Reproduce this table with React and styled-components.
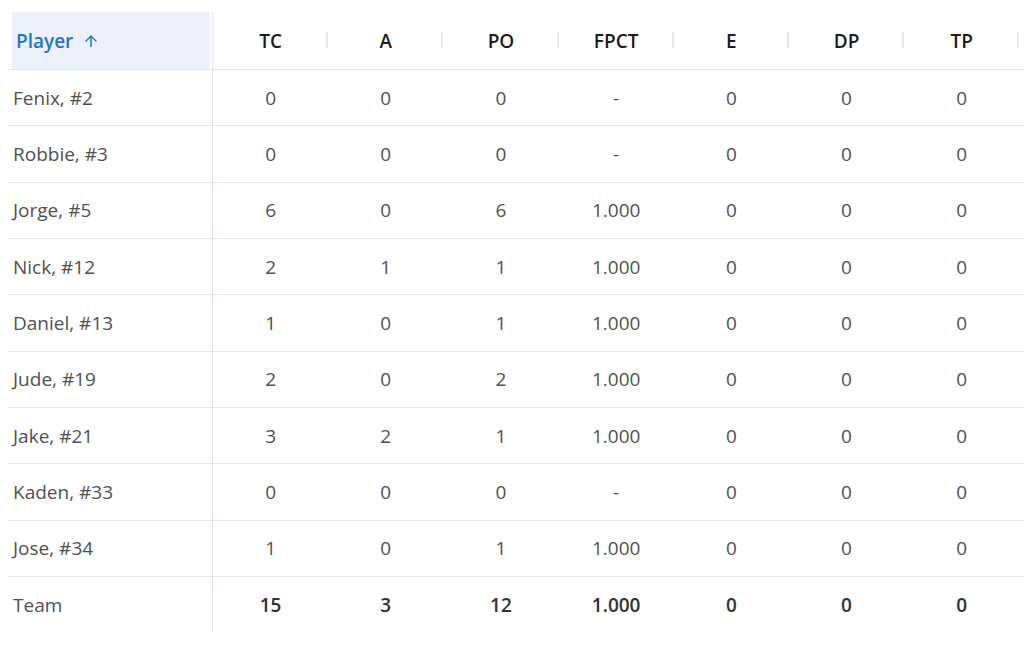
import React from 'react';
import styled, { createGlobalStyle } from 'styled-components';

const GlobalStyle = createGlobalStyle`
  body {
    margin: 0;
    background: #fff;
    font-family: "Open Sans", "Noto Sans", sans-serif;
    overflow: hidden;
  }
`;

const columns = ['TC', 'A', 'PO', 'FPCT', 'E', 'DP', 'TP'];

const players = [
    ['Fenix, #2', 0, 0, 0, '-', 0, 0, 0],
    ['Robbie, #3', 0, 0, 0, '-', 0, 0, 0],
    ['Jorge, #5', 6, 0, 6, '1.000', 0, 0, 0],
    ['Nick, #12', 2, 1, 1, '1.000', 0, 0, 0],
    ['Daniel, #13', 1, 0, 1, '1.000', 0, 0, 0],
    ['Jude, #19', 2, 0, 2, '1.000', 0, 0, 0],
    ['Jake, #21', 3, 2, 1, '1.000', 0, 0, 0],
    ['Kaden, #33', 0, 0, 0, '-', 0, 0, 0],
    ['Jose, #34', 1, 0, 1, '1.000', 0, 0, 0],
];

const team = ['Team', 15, 3, 12, '1.000', 0, 0, 0];

const Wrap = styled.div`
    padding: 12px 0 0 8px;
    width: 1016px;
`;

const Row = styled.div`
    display: grid;
    grid-template-columns: 205px repeat(7, 115.2px) 1fr;
    height: ${(p) => (p.head ? '58px' : '56.33px')};
    box-sizing: border-box;
    border-bottom: ${(p) => (p.last ? 'none' : '1px solid #e3e8ef')};
`;

const NameCell = styled.div`
    display: flex;
    align-items: center;
    border-right: 1px solid #dfe6f0;
    padding-left: 5px;
    font-size: 19px;
    color: #505050;
`;

const HeadName = styled.div`
    border-right: 1px solid #dfe6f0;
    padding: 0 2px 0 4px;
    display: flex;
`;

const SortBox = styled.div`
    flex: 1;
    background: #edf2fa;
    display: flex;
    align-items: center;
    gap: 9px;
    padding-left: 4px;
    font-size: 19px;
    font-weight: 600;
    color: #1f74c9;
    svg {
        width: 18px;
        height: 18px;
        fill: #1f74c9;
    }
`;

const HeadCell = styled.div`
    position: relative;
    display: flex;
    align-items: center;
    justify-content: center;
    font-size: 19px;
    font-weight: 600;
    color: #1b1b1b;
    &::after {
        content: '';
        position: absolute;
        right: 0;
        top: 20px;
        width: 2px;
        height: 16px;
        background: #e2e8f1;
    }
`;

const Cell = styled.div`
    display: flex;
    align-items: center;
    justify-content: center;
    font-size: 19px;
    font-weight: ${(p) => (p.bold ? 600 : 400)};
    color: ${(p) => (p.bold ? '#333' : '#505050')};
`;

const ArrowUp = () => (
    <svg viewBox="0 0 24 24">
        <path d="M4 12l1.41 1.41L11 7.83V20h2V7.83l5.58 5.59L20 12l-8-8-8 8z" />
    </svg>
);

const App = () => {
    return (
        <Wrap>
            <GlobalStyle />
            <Row head>
                <HeadName>
                    <SortBox>
                        Player <ArrowUp />
                    </SortBox>
                </HeadName>
                {columns.map((c) => (
                    <HeadCell key={c}>{c}</HeadCell>
                ))}
                <div />
            </Row>
            {players.map((p) => (
                <Row key={p[0]}>
                    <NameCell>{p[0]}</NameCell>
                    {p.slice(1).map((v, i) => (
                        <Cell key={i}>{v}</Cell>
                    ))}
                    <div />
                </Row>
            ))}
            <Row last>
                <NameCell>{team[0]}</NameCell>
                {team.slice(1).map((v, i) => (
                    <Cell key={i} bold>
                        {v}
                    </Cell>
                ))}
                <div />
            </Row>
        </Wrap>
    );
};

export default App;
